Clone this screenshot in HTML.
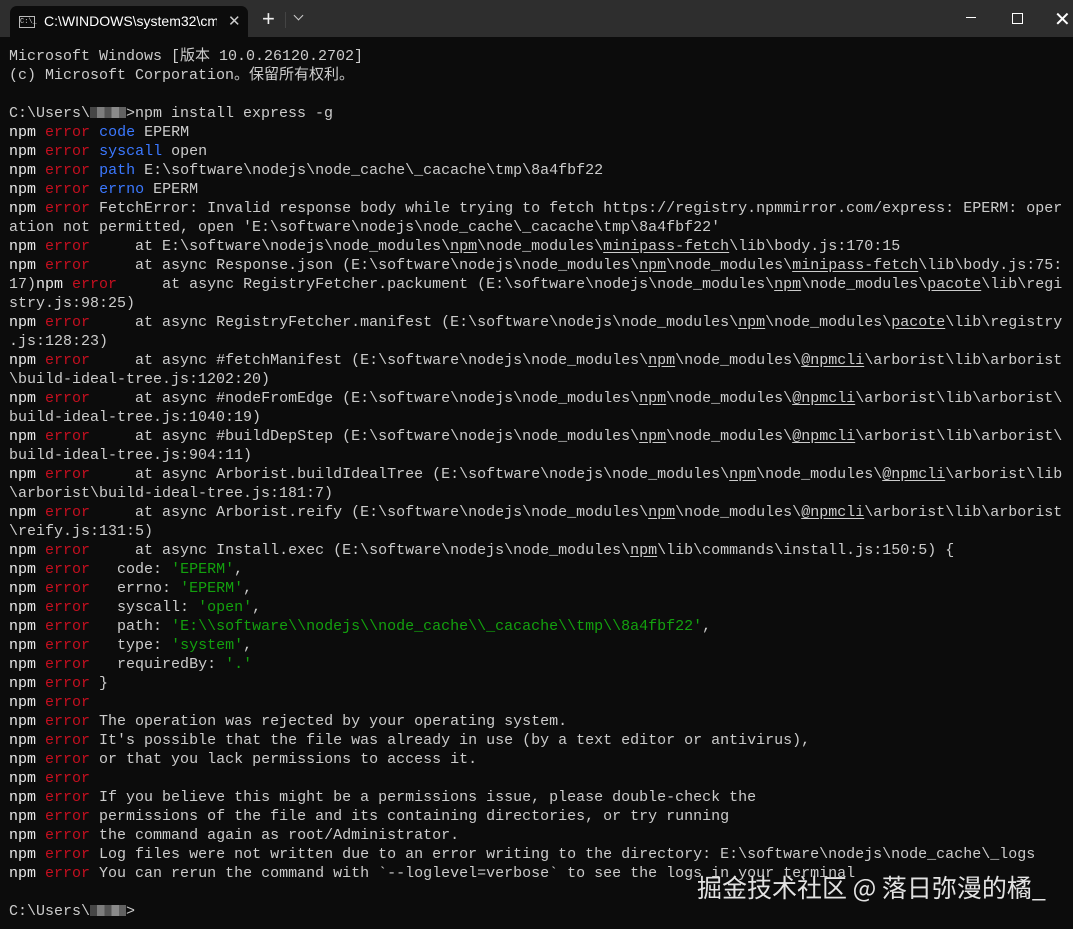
<!DOCTYPE html>
<html><head><meta charset="utf-8"><style>
html,body{margin:0;padding:0;background:#0c0c0c;width:1073px;height:929px;overflow:hidden}
.tb{position:absolute;left:0;top:0;width:1073px;height:37px;background:#2e2e2e}
.tab{position:absolute;left:10px;top:6px;width:238px;height:31px;background:#0c0c0c;border-radius:7px 7px 0 0}
.tab .t{position:absolute;left:34px;top:7px;font:14px "Liberation Sans",sans-serif;color:#fff;white-space:nowrap;width:173px;overflow:hidden}
.ic{position:absolute;left:9px;top:10px;width:14px;height:10px;border:1px solid #bbb;font:7px "Liberation Mono",monospace;color:#ccc;line-height:10px;text-align:center}
.x{position:absolute;left:218px;top:6px;color:#ccc;font:15px "Liberation Sans",sans-serif}
.plus{position:absolute;left:262px;top:6px;color:#eee;font:22px "Liberation Sans",sans-serif}
.chev{position:absolute;left:295px;top:12px;width:6px;height:6px;border-right:1.3px solid #ccc;border-bottom:1.3px solid #ccc;transform:rotate(45deg)}
.sep{position:absolute;left:285px;top:12px;width:1px;height:16px;background:#444}
.min{position:absolute;left:966px;top:17px;width:10px;height:1px;background:#fff}
.max{position:absolute;left:1012px;top:13px;width:9px;height:9px;border:1px solid #fff}
.cl{position:absolute;left:1054px;top:7px;color:#fff;font:20px "Liberation Sans",sans-serif}
pre{position:absolute;left:9px;top:47px;margin:0;font:15px/19px "Liberation Mono","Noto Sans CJK SC",monospace;color:#cccccc}
.r{color:#c50f1f}.b{color:#3b78ff}.g{color:#13a10e}.w{color:#e8e8e8}
u{text-decoration:underline;text-underline-offset:2px}
.blur{display:inline-block;width:36px;height:11px;background:linear-gradient(90deg,#555 0 20%,#999 20% 40%,#666 40% 60%,#aaa 60% 80%,#777 80%);vertical-align:-1px;opacity:.8}
.wm{position:absolute;left:697px;top:869px;font:25px "Noto Sans CJK SC","Liberation Sans",sans-serif;color:#e2e2e2;white-space:nowrap}
</style></head><body>
<div class="tb">
<div class="tab"><div class="ic">C:\_</div><div class="t">C:\WINDOWS\system32\cmd.exe</div><div class="x">✕</div></div>
<div class="plus">+</div><div class="sep"></div><div class="chev"></div>
<div class="min"></div><div class="max"></div><div class="cl">✕</div>
</div>
<pre>Microsoft Windows [版本 10.0.26120.2702]
(c) Microsoft Corporation。保留所有权利。

C:\Users\<span class="blur"></span>&gt;npm install express -g
<span class="w">npm</span> <span class="r">error</span> <span class="b">code</span> EPERM
<span class="w">npm</span> <span class="r">error</span> <span class="b">syscall</span> open
<span class="w">npm</span> <span class="r">error</span> <span class="b">path</span> E:\software\nodejs\node_cache\_cacache\tmp\8a4fbf22
<span class="w">npm</span> <span class="r">error</span> <span class="b">errno</span> EPERM
<span class="w">npm</span> <span class="r">error</span> FetchError: Invalid response body while trying to fetch https://registry.npmmirror.com/express: EPERM: oper
ation not permitted, open 'E:\software\nodejs\node_cache\_cacache\tmp\8a4fbf22'
<span class="w">npm</span> <span class="r">error</span>     at E:\software\nodejs\node_modules\<u>npm</u>\node_modules\<u>minipass-fetch</u>\lib\body.js:170:15
<span class="w">npm</span> <span class="r">error</span>     at async Response.json (E:\software\nodejs\node_modules\<u>npm</u>\node_modules\<u>minipass-fetch</u>\lib\body.js:75:
17)<span class="w">npm</span> <span class="r">error</span>     at async RegistryFetcher.packument (E:\software\nodejs\node_modules\<u>npm</u>\node_modules\<u>pacote</u>\lib\regi
stry.js:98:25)
<span class="w">npm</span> <span class="r">error</span>     at async RegistryFetcher.manifest (E:\software\nodejs\node_modules\<u>npm</u>\node_modules\<u>pacote</u>\lib\registry
.js:128:23)
<span class="w">npm</span> <span class="r">error</span>     at async #fetchManifest (E:\software\nodejs\node_modules\<u>npm</u>\node_modules\<u>@npmcli</u>\arborist\lib\arborist
\build-ideal-tree.js:1202:20)
<span class="w">npm</span> <span class="r">error</span>     at async #nodeFromEdge (E:\software\nodejs\node_modules\<u>npm</u>\node_modules\<u>@npmcli</u>\arborist\lib\arborist\
build-ideal-tree.js:1040:19)
<span class="w">npm</span> <span class="r">error</span>     at async #buildDepStep (E:\software\nodejs\node_modules\<u>npm</u>\node_modules\<u>@npmcli</u>\arborist\lib\arborist\
build-ideal-tree.js:904:11)
<span class="w">npm</span> <span class="r">error</span>     at async Arborist.buildIdealTree (E:\software\nodejs\node_modules\<u>npm</u>\node_modules\<u>@npmcli</u>\arborist\lib
\arborist\build-ideal-tree.js:181:7)
<span class="w">npm</span> <span class="r">error</span>     at async Arborist.reify (E:\software\nodejs\node_modules\<u>npm</u>\node_modules\<u>@npmcli</u>\arborist\lib\arborist
\reify.js:131:5)
<span class="w">npm</span> <span class="r">error</span>     at async Install.exec (E:\software\nodejs\node_modules\<u>npm</u>\lib\commands\install.js:150:5) {
<span class="w">npm</span> <span class="r">error</span>   code: <span class="g">'EPERM'</span>,
<span class="w">npm</span> <span class="r">error</span>   errno: <span class="g">'EPERM'</span>,
<span class="w">npm</span> <span class="r">error</span>   syscall: <span class="g">'open'</span>,
<span class="w">npm</span> <span class="r">error</span>   path: <span class="g">'E:\\software\\nodejs\\node_cache\\_cacache\\tmp\\8a4fbf22'</span>,
<span class="w">npm</span> <span class="r">error</span>   type: <span class="g">'system'</span>,
<span class="w">npm</span> <span class="r">error</span>   requiredBy: <span class="g">'.'</span>
<span class="w">npm</span> <span class="r">error</span> }
<span class="w">npm</span> <span class="r">error</span>
<span class="w">npm</span> <span class="r">error</span> The operation was rejected by your operating system.
<span class="w">npm</span> <span class="r">error</span> It's possible that the file was already in use (by a text editor or antivirus),
<span class="w">npm</span> <span class="r">error</span> or that you lack permissions to access it.
<span class="w">npm</span> <span class="r">error</span>
<span class="w">npm</span> <span class="r">error</span> If you believe this might be a permissions issue, please double-check the
<span class="w">npm</span> <span class="r">error</span> permissions of the file and its containing directories, or try running
<span class="w">npm</span> <span class="r">error</span> the command again as root/Administrator.
<span class="w">npm</span> <span class="r">error</span> Log files were not written due to an error writing to the directory: E:\software\nodejs\node_cache\_logs
<span class="w">npm</span> <span class="r">error</span> You can rerun the command with `--loglevel=verbose` to see the logs in your terminal

C:\Users\<span class="blur"></span>&gt;</pre>
<div class="wm">掘金技术社区 @ 落日弥漫的橘_</div>
</body></html>
